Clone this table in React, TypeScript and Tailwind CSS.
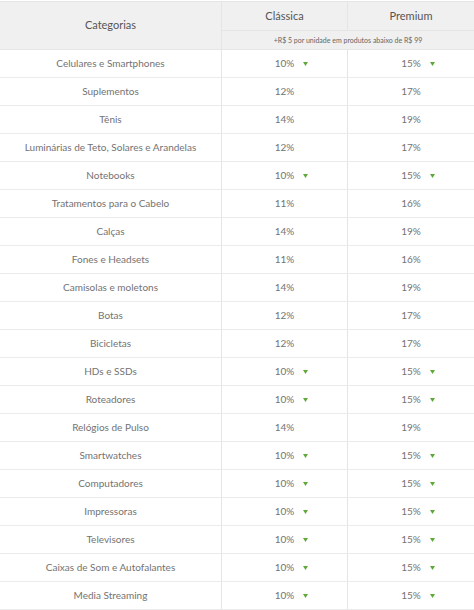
import React from 'react';

type Row = { name: string; classic: string; premium: string; down?: boolean };

const rows: Row[] = [
  { name: 'Celulares e Smartphones', classic: '10%', premium: '15%', down: true },
  { name: 'Suplementos', classic: '12%', premium: '17%' },
  { name: 'Tênis', classic: '14%', premium: '19%' },
  { name: 'Luminárias de Teto, Solares e Arandelas', classic: '12%', premium: '17%' },
  { name: 'Notebooks', classic: '10%', premium: '15%', down: true },
  { name: 'Tratamentos para o Cabelo', classic: '11%', premium: '16%' },
  { name: 'Calças', classic: '14%', premium: '19%' },
  { name: 'Fones e Headsets', classic: '11%', premium: '16%' },
  { name: 'Camisolas e moletons', classic: '14%', premium: '19%' },
  { name: 'Botas', classic: '12%', premium: '17%' },
  { name: 'Bicicletas', classic: '12%', premium: '17%' },
  { name: 'HDs e SSDs', classic: '10%', premium: '15%', down: true },
  { name: 'Roteadores', classic: '10%', premium: '15%', down: true },
  { name: 'Relógios de Pulso', classic: '14%', premium: '19%' },
  { name: 'Smartwatches', classic: '10%', premium: '15%', down: true },
  { name: 'Computadores', classic: '10%', premium: '15%', down: true },
  { name: 'Impressoras', classic: '10%', premium: '15%', down: true },
  { name: 'Televisores', classic: '10%', premium: '15%', down: true },
  { name: 'Caixas de Som e Autofalantes', classic: '10%', premium: '15%', down: true },
  { name: 'Media Streaming', classic: '10%', premium: '15%', down: true },
];

function Rate({ value, down }: { value: string; down?: boolean }) {
  return (
    <span className="relative">
      {value}
      {down && (
        <svg className="absolute left-full top-1/2 -translate-y-1/2 ml-[9px]" width="5" height="5" viewBox="0 0 5 5">
          <path d="M0 0.5 L5 0.5 L2.5 4.5 Z" fill="#5fa83a" />
        </svg>
      )}
    </span>
  );
}

export default function App() {
  return (
    <div className="w-[474px] h-[610px] overflow-hidden bg-white pt-px text-[#737373] font-['Lato','Open_Sans',sans-serif]">
      {/* Header */}
      <div className="flex bg-[#f0f0f0] border-y border-[#e5e5e5] text-[11px] text-[#555]">
        <div className="w-[222px] flex items-center justify-center border-r border-[#e5e5e5]">Categorias</div>
        <div className="flex-1 flex flex-col">
          <div className="flex h-[28px]">
            <div className="w-[126px] flex items-center justify-center border-r border-[#e5e5e5]">Clássica</div>
            <div className="flex-1 flex items-center justify-center">Premium</div>
          </div>
          <div className="h-[19px] flex items-center justify-center border-t border-[#e5e5e5] text-[7px] text-[#666]">
            +R$ 5 por unidade em produtos abaixo de R$ 99
          </div>
        </div>
      </div>

      {/* Body */}
      {rows.map((r) => (
        <div key={r.name} className="flex h-[28px] border-b border-[#ebebeb] text-[10px]">
          <div className="w-[222px] flex items-center justify-center border-r border-[#e5e5e5]">{r.name}</div>
          <div className="w-[126px] flex items-center justify-center border-r border-[#e5e5e5]">
            <Rate value={r.classic} down={r.down} />
          </div>
          <div className="flex-1 flex items-center justify-center">
            <Rate value={r.premium} down={r.down} />
          </div>
        </div>
      ))}
    </div>
  );
}
